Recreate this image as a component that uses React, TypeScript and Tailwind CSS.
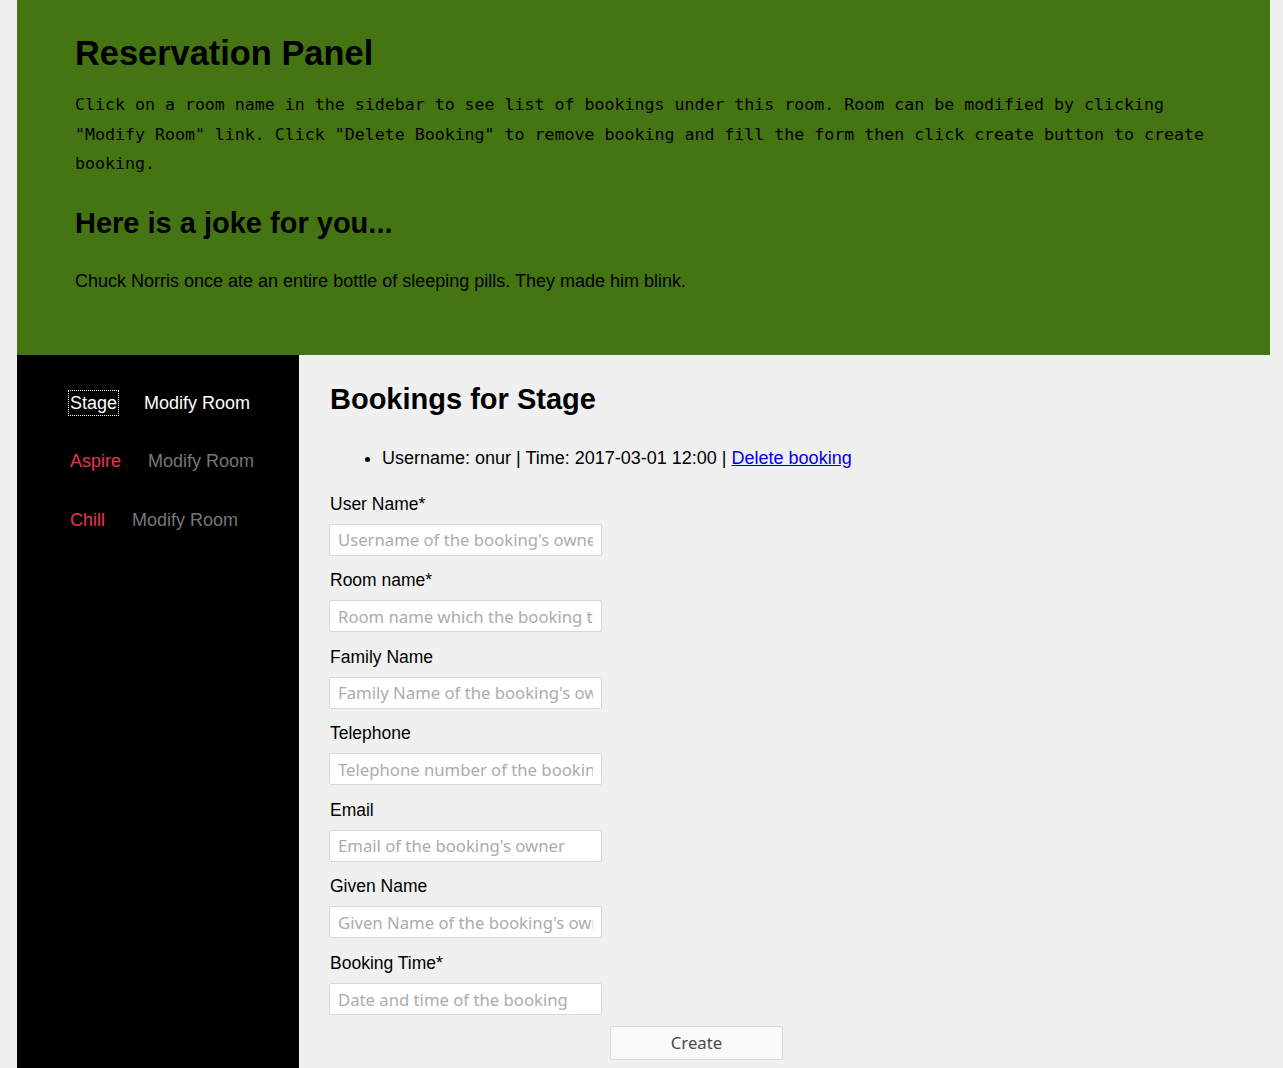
import React from 'react';

const rooms = [
  { name: 'Stage', active: true },
  { name: 'Aspire', active: false },
  { name: 'Chill', active: false },
];

const fields = [
  { label: 'User Name*', placeholder: "Username of the booking's owner" },
  { label: 'Room name*', placeholder: 'Room name which the booking takes place' },
  { label: 'Family Name', placeholder: "Family Name of the booking's owner" },
  { label: 'Telephone', placeholder: 'Telephone number of the booking owner' },
  { label: 'Email', placeholder: "Email of the booking's owner" },
  { label: 'Given Name', placeholder: "Given Name of the booking's owner" },
  { label: 'Booking Time*', placeholder: 'Date and time of the booking' },
];

export default function App() {
  return (
    <div className="min-h-screen bg-[#f0f0f0] font-['Liberation_Sans',Arial,sans-serif] text-black">
      <div className="ml-[17px] w-[1253px] flex flex-col min-h-[1068px]">
        {/* Header panel */}
        <header className="bg-[#457412] pl-[58px] pr-[40px] pt-[33px] pb-[64px]">
          <h1 className="text-[34.4px] leading-[40px] font-bold">Reservation Panel</h1>
          <p className="mt-[17px] font-['DejaVu_Sans_Mono',monospace] text-[16.6px] leading-[29.5px]">
            Click on a room name in the sidebar to see list of bookings under this room. Room can be modified by clicking
            "Modify Room" link. Click "Delete Booking" to remove booking and fill the form then click create button to create
            booking.
          </p>
          <h2 className="mt-[27px] text-[29px] leading-[34px] font-bold">Here is a joke for you...</h2>
          <p className="mt-[31px] text-[18px] leading-[20px]">
            Chuck Norris once ate an entire bottle of sleeping pills. They made him blink.
          </p>
        </header>

        <div className="flex flex-1">
          {/* Sidebar */}
          <aside className="w-[282px] bg-black pl-[53px] pt-[37px] flex flex-col gap-[36.5px]">
            {rooms.map((r) => (
              <div key={r.name} className="flex items-center gap-[27px] text-[18px] leading-[22px]">
                <a
                  className={
                    r.active
                      ? 'text-white outline outline-1 outline-dotted outline-white outline-offset-[1px]'
                      : 'text-[#e8344e]'
                  }
                >
                  {r.name}
                </a>
                <a className={r.active ? 'text-white' : 'text-[#767676]'}>Modify Room</a>
              </div>
            ))}
          </aside>

          {/* Main */}
          <main className="flex-1 pl-[31px] pt-[27px] pb-[8px]">
            <h2 className="text-[29px] leading-[34px] font-bold">Bookings for Stage</h2>
            <ul className="mt-[32px] pl-[52px] list-disc text-[18px] leading-[20px]">
              <li>
                Username: onur | Time: 2017-03-01 12:00 |{' '}
                <a href="#" className="text-[#0000ee] underline">
                  Delete booking
                </a>
              </li>
            </ul>

            <form className="mt-[26px] flex flex-col gap-[14.6px]" onSubmit={(e) => e.preventDefault()}>
              {fields.map((f) => (
                <div key={f.label} className="flex flex-col">
                  <label className="text-[17.5px] leading-[20px] mb-[10px]">{f.label}</label>
                  <input
                    placeholder={f.placeholder}
                    className="w-[273px] h-[32px] -ml-[1px] bg-white border border-[#d3d7e2] rounded-[2px] px-[8px] font-['Noto_Sans',sans-serif] text-[16.7px] placeholder:text-[#acacac] outline-none"
                  />
                </div>
              ))}
            </form>
            <div className="mt-[10.5px] pl-[280px]">
              <button className="w-[173px] h-[34px] bg-[#f9f9f9] border border-[#d3d7e2] rounded-[2px] font-['Noto_Sans',sans-serif] text-[16.7px] text-[#4a4a4a]">
                Create
              </button>
            </div>
          </main>
        </div>
      </div>
    </div>
  );
}
